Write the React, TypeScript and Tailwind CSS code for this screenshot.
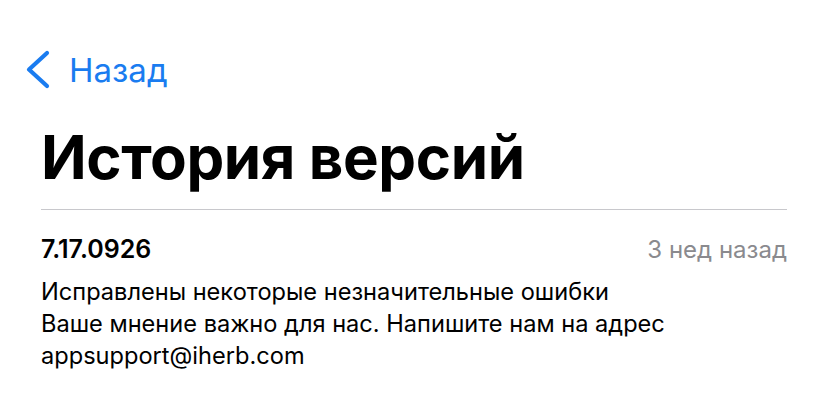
export default function App() {
  return (
    <div className="w-[828px] h-[400px] bg-white overflow-hidden font-['Inter',sans-serif] text-black">
      <div className="flex items-center pt-[50px] pl-[25px] text-[#1a7cf0]">
        <svg width="26" height="40" viewBox="0 0 26 40" fill="none">
          <polyline points="22,3 4,19.5 22,36" stroke="currentColor" strokeWidth="4.2" strokeLinecap="round" strokeLinejoin="round" />
        </svg>
        <span className="ml-[18px] text-[33px] leading-[40px]">Назад</span>
      </div>
      <div className="px-[41px]">
        <h1 className="mt-[31px] text-[60px] leading-[72px] font-bold tracking-[-0.4px]">История версий</h1>
        <div className="mt-[16px] h-px bg-[#c8c8cc]" />
        <div className="mt-[23px] flex items-baseline justify-between">
          <span className="text-[25px] leading-[32px] font-semibold">7.17.0926</span>
          <span className="text-[24px] leading-[32px] text-[#8a8a8e]">3 нед назад</span>
        </div>
        <div className="mt-[10px] text-[23.6px] leading-[32px]">
          <p>Исправлены некоторые незначительные ошибки</p>
          <p>Ваше мнение важно для нас. Напишите нам на адрес</p>
          <p>appsupport@iherb.com</p>
        </div>
      </div>
    </div>
  );
}
